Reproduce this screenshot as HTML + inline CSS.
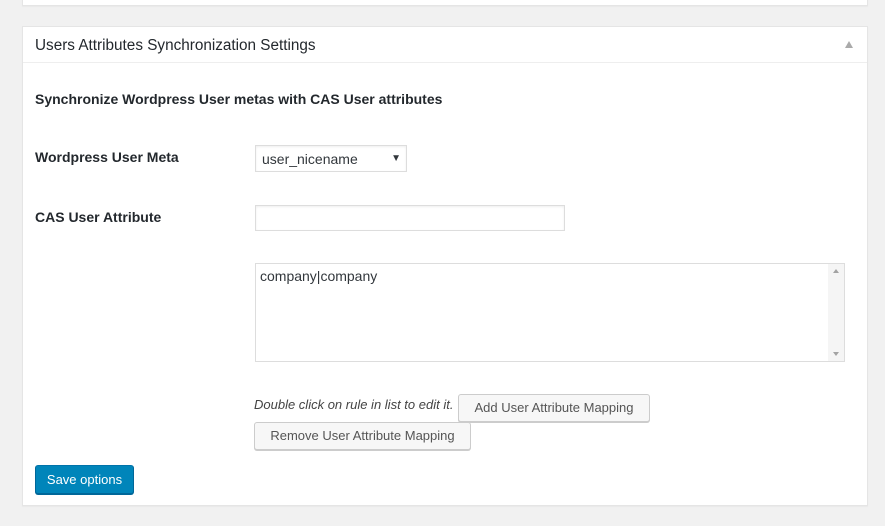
<!DOCTYPE html>
<html><head><style>
body{margin:0;width:885px;height:526px;background:#f1f1f1;font-family:"Liberation Sans",sans-serif;color:#23282d;position:relative;overflow:hidden}
.a{position:absolute}
.p{background:#fff;border:1px solid #e5e5e5;box-shadow:0 1px 1px rgba(0,0,0,.04);box-sizing:border-box}
.b{position:absolute;background:#f7f7f7;border:1px solid #ccc;border-radius:3px;box-shadow:0 1px 0 #ccc;font-size:13px;color:#555;box-sizing:border-box;text-align:center}
</style></head><body>
<div class="a p" style="left:22px;top:-2px;width:846px;height:8px"></div>
<div class="a p" style="left:22px;top:26px;width:846px;height:480px"></div>
<div class="a" style="left:23px;top:62px;width:844px;height:1px;background:#eee"></div>
<div class="a" style="left:35px;top:37px;font-size:15.3px">Users Attributes Synchronization Settings</div>
<div class="a" style="left:845px;top:41px;width:0;height:0;border-left:4px solid transparent;border-right:4px solid transparent;border-bottom:7px solid #aaa"></div>
<div class="a" style="left:35px;top:91px;font-size:14px;font-weight:bold">Synchronize Wordpress User metas with CAS User attributes</div>
<div class="a" style="left:35px;top:149px;font-size:14px;font-weight:bold">Wordpress User Meta</div>
<div class="a" style="left:35px;top:209px;font-size:14px;font-weight:bold">CAS User Attribute</div>
<div class="a" style="left:255px;top:145px;width:152px;height:27px;border:1px solid #ddd;box-sizing:border-box;box-shadow:inset 0 1px 2px rgba(0,0,0,.07);font-size:14px;padding:5px 6px;color:#32373c">user_nicename<span style="position:absolute;right:5px;top:7px;font-size:10px">▼</span></div>
<div class="a" style="left:255px;top:205px;width:310px;height:26px;border:1px solid #ddd;box-sizing:border-box;box-shadow:inset 0 1px 2px rgba(0,0,0,.07)"></div>
<div class="a" style="left:255px;top:263px;width:590px;height:99px;border:1px solid #ddd;box-sizing:border-box;font-size:14px;padding:4px 4px;color:#32373c">company|company
<div class="a" style="right:0;top:0;width:16px;height:97px;background:#f5f5f5"></div>
<div class="a" style="right:5px;top:5px;border-left:3px solid transparent;border-right:3px solid transparent;border-bottom:4px solid #a3a3a3"></div>
<div class="a" style="right:5px;bottom:5px;border-left:3px solid transparent;border-right:3px solid transparent;border-top:4px solid #a3a3a3"></div>
</div>
<div class="a" style="left:254px;top:397px;font-size:13px;font-style:italic;color:#444">Double click on rule in list to edit it.</div>
<div class="b" style="left:458px;top:394px;width:192px;height:28px;line-height:26px">Add User Attribute Mapping</div>
<div class="b" style="left:254px;top:422px;width:217px;height:28px;line-height:26px">Remove User Attribute Mapping</div>
<div class="b" style="left:35px;top:465px;width:99px;height:29px;line-height:27px;background:#0085ba;border-color:#0073aa #006799 #006799;box-shadow:0 1px 0 #006799;color:#fff">Save options</div>
</body></html>
